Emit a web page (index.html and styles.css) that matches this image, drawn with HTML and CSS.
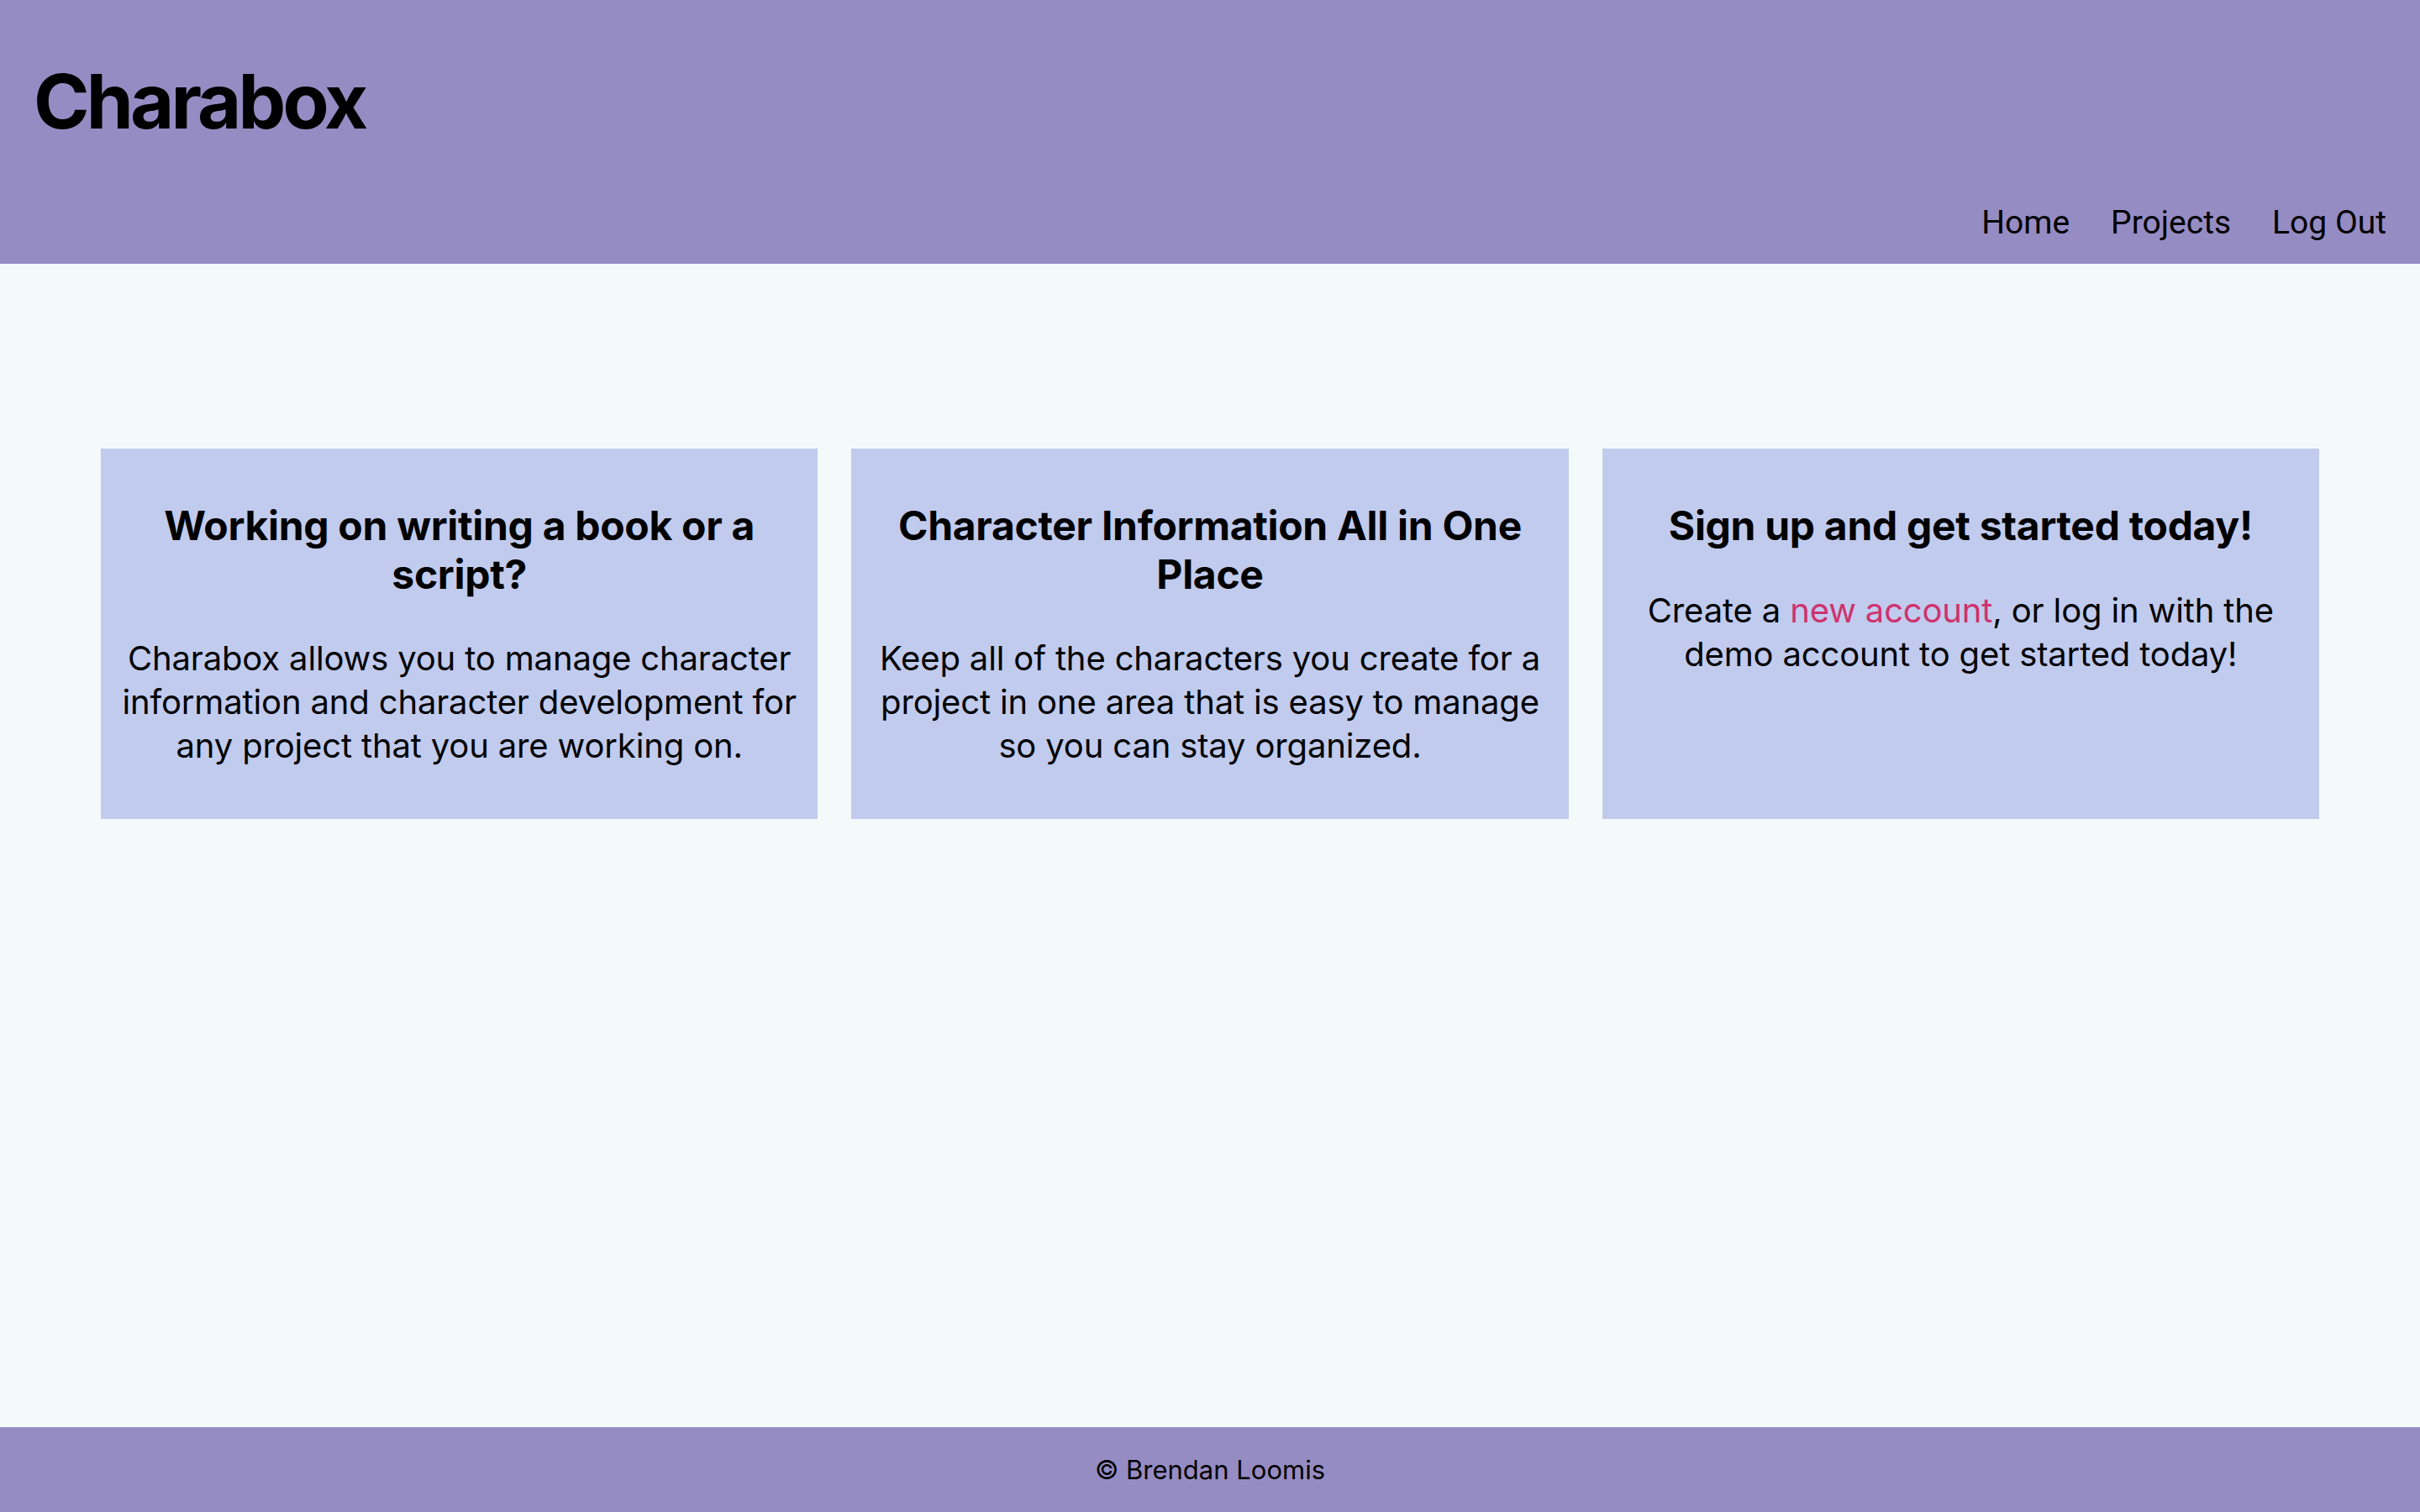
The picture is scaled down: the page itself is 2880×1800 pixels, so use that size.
FILE: index.html
```html
<!DOCTYPE html>
<html lang="en">
<head>
<meta charset="utf-8">
<title>Charabox</title>
<link rel="stylesheet" href="styles.css">
</head>
<body>
<header class="site-header">
  <h1 class="logo">Charabox</h1>
  <nav class="nav">
    <a class="nav-link" href="#">Home</a>
    <a class="nav-link" href="#">Projects</a>
    <a class="nav-link" href="#">Log Out</a>
  </nav>
</header>
<main class="main">
  <section class="cards">
    <article class="card">
      <h2 class="card-title">Working on writing a book or a script?</h2>
      <p class="card-text">Charabox allows you to manage character information and character development for any project that you are working on.</p>
    </article>
    <article class="card">
      <h2 class="card-title">Character Information All in One Place</h2>
      <p class="card-text">Keep all of the characters you create for a project in one area that is easy to manage so you can stay organized.</p>
    </article>
    <article class="card">
      <h2 class="card-title">Sign up and get started today!</h2>
      <p class="card-text">Create a <a class="link" href="#">new account</a>, or log in with the demo account to get started today!</p>
    </article>
  </section>
</main>
<footer class="site-footer">
  <p class="copyright">© Brendan Loomis</p>
</footer>
</body>
</html>
```
FILE: styles.css
```css
* { box-sizing: border-box; }
html, body { margin: 0; padding: 0; }
body {
  min-height: 100vh;
  display: flex;
  flex-direction: column;
  background: #f4faf9;
  color: #000;
  font-family: Inter, "Liberation Sans", sans-serif;
}
.site-header {
  height: 314px;
  background: #968cc4;
  display: flex;
  flex-direction: column;
  justify-content: space-between;
  padding: 76px 40px 29px 40px;
}
.logo {
  margin: 0;
  font-family: Inter, sans-serif;
  font-weight: 700;
  font-size: 90px;
  line-height: 1;
  letter-spacing: -3.8px;
}
.nav {
  display: flex;
  justify-content: flex-end;
  gap: 49px;
}
.nav-link {
  font-family: Roboto, sans-serif;
  font-size: 39px;
  line-height: 1;
  color: #000;
  text-decoration: none;
}
.main {
  flex: 1;
  padding: 220px 120px 0 120px;
}
.cards {
  display: grid;
  grid-template-columns: repeat(3, 1fr);
  gap: 40px;
}
.card {
  background: #c1cbee;
  height: 441px;
  padding: 23px 16px;
  text-align: center;
}
.card-title {
  margin: 40px 0 0 0;
  font-size: 48px;
  font-weight: 700;
  line-height: 1.2;
  letter-spacing: -0.3px;
}
.card-text {
  margin: 46px 0 0 0;
  font-size: 40px;
  line-height: 52px;
  letter-spacing: -0.15px;
}
.link {
  color: #cf326e;
  text-decoration: none;
}
.site-footer {
  height: 101px;
  background: #968cc4;
  display: flex;
  align-items: center;
  justify-content: center;
}
.copyright {
  margin: 0;
  font-size: 31px;
}
```
